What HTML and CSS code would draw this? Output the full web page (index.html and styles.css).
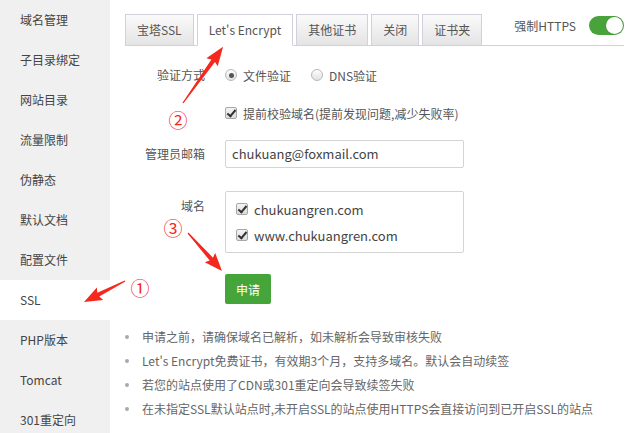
FILE: index.html
```
<!DOCTYPE html>
<html lang="zh-CN">
<head>
    <meta charset="UTF-8">
    <meta name="viewport" content="width=device-width, initial-scale=1.0">
    <title>SSL - Let's Encrypt</title>
    <link rel="stylesheet" href="styles.css">
</head>
<body>
    <div class="page">
        <ul class="side-menu">
            <li>域名管理</li>
            <li>子目录绑定</li>
            <li>网站目录</li>
            <li>流量限制</li>
            <li>伪静态</li>
            <li>默认文档</li>
            <li>配置文件</li>
            <li class="active">SSL</li>
            <li>PHP版本</li>
            <li>Tomcat</li>
            <li>301重定向</li>
        </ul>

        <div class="main">
            <div class="tab-bar">
                <div class="tabs">
                    <span class="tab">宝塔SSL</span>
                    <span class="tab active">Let's Encrypt</span>
                    <span class="tab">其他证书</span>
                    <span class="tab">关闭</span>
                    <span class="tab">证书夹</span>
                </div>
                <div class="force-https">
                    <span>强制HTTPS</span>
                    <span class="switch on"></span>
                </div>
            </div>

            <div class="form">
                <div class="row row-method">
                    <label class="row-label">验证方式</label>
                    <div class="row-field">
                        <span class="radio checked"></span><span class="opt">文件验证</span>
                        <span class="radio"></span><span class="opt">DNS验证</span>
                    </div>
                </div>
                <div class="row row-check">
                    <label class="row-label"></label>
                    <div class="row-field">
                        <span class="checkbox checked"></span><span class="opt">提前校验域名(提前发现问题,减少失败率)</span>
                    </div>
                </div>
                <div class="row row-mail">
                    <label class="row-label">管理员邮箱</label>
                    <div class="row-field">
                        <div class="text-input">chukuang@foxmail.com</div>
                    </div>
                </div>
                <div class="row row-domain">
                    <label class="row-label">域名</label>
                    <div class="row-field">
                        <div class="domain-box">
                            <div class="domain"><span class="checkbox checked"></span>chukuangren.com</div>
                            <div class="domain"><span class="checkbox checked"></span>www.chukuangren.com</div>
                        </div>
                    </div>
                </div>
                <div class="row row-submit">
                    <label class="row-label"></label>
                    <div class="row-field">
                        <button class="btn-apply">申请</button>
                    </div>
                </div>
            </div>

            <ul class="tips">
                <li>申请之前，请确保域名已解析，如未解析会导致审核失败</li>
                <li>Let's Encrypt免费证书，有效期3个月，支持多域名。默认会自动续签</li>
                <li>若您的站点使用了CDN或301重定向会导致续签失败</li>
                <li>在未指定SSL默认站点时,未开启SSL的站点使用HTTPS会直接访问到已开启SSL的站点</li>
            </ul>
        </div>

        <!-- red annotations drawn over the screenshot -->
        <svg class="marks" width="626" height="433" viewBox="0 0 626 433">
            <g fill="#f4281c">
                <polygon transform="translate(125 281) rotate(152.9)" points="0,-0.6 30,-2.2 28,-7 46,0 28,7 30,2.2 0,0.6"/>
                <polygon transform="translate(183 103) rotate(-54.5)" points="0,-0.6 52,-2.2 50,-7 69,0 50,7 52,2.2 0,0.6"/>
                <polygon transform="translate(188 233) rotate(48.2)" points="0,-0.6 35,-2.2 33,-7 51,0 33,7 35,2.2 0,0.6"/>
            </g>
            <g class="nums">
                <text x="140" y="287">①</text>
                <text x="178" y="119">②</text>
                <text x="173" y="227">③</text>
            </g>
        </svg>
    </div>
</body>
</html>
```

FILE: styles.css
```
* {
    box-sizing: border-box;
}
body {
    margin: 0;
    background: #fff;
    font-family: "Noto Sans CJK SC", sans-serif;
    font-size: 12px;
    color: #555;
}
.page {
    position: relative;
    display: flex;
    width: 626px;
    height: 433px;
    overflow: hidden;
}
.side-menu {
    list-style: none;
    margin: 0;
    padding: 0;
    width: 110px;
    flex-shrink: 0;
    background: #f0f0f0;
}
.side-menu li {
    height: 40px;
    line-height: 40px;
    padding-left: 20px;
    color: #444;
}
.side-menu li.active {
    background: #fff;
}
.main {
    flex: 1;
    padding: 14px 2px 0 15px;
}
.tab-bar {
    display: flex;
    justify-content: space-between;
    border-bottom: 1px solid #d2d0dc;
    height: 32px;
}
.tabs {
    display: flex;
    gap: 3px;
}
.tab {
    height: 32px;
    line-height: 30px;
    padding: 0 11px;
    border: 1px solid #d2d0dc;
    background: linear-gradient(#fafafa, #e4e4e4);
    color: #555;
}
.tab.active {
    background: #fff;
    border-bottom-color: #fff;
}
.force-https {
    display: flex;
    align-items: center;
    gap: 13px;
    margin-top: 2px;
    height: 19px;
}
.switch {
    position: relative;
    width: 35px;
    height: 19px;
    border-radius: 10px;
    background: #d8d8d8;
}
.switch.on {
    background: #47a33a;
}
.switch.on::after {
    content: "";
    position: absolute;
    right: 1px;
    top: 1px;
    width: 17px;
    height: 17px;
    border-radius: 50%;
    background: #fff;
    box-shadow: 0 0 1px rgba(0,0,0,0.3);
}
.form {
    margin-top: 14px;
}
.row {
    display: flex;
}
.row-label {
    width: 80px;
    margin-right: 20px;
    text-align: right;
    line-height: 30px;
    color: #555;
}
.row-field {
    display: flex;
    align-items: center;
    min-height: 30px;
}
.row-method { margin-bottom: 8px; }
.row-check { margin-bottom: 11px; }
.row-mail { margin-bottom: 22px; }
.row-domain { margin-bottom: 21px; }
.row-domain .row-label {
    line-height: 30px;
}
.opt {
    margin-left: 6px;
    margin-right: 20px;
    color: #555;
}
.radio {
    display: inline-block;
    width: 12px;
    height: 12px;
    border-radius: 50%;
    border: 1px solid #b8b8b8;
    background: linear-gradient(#fdfdfd, #e2e2e2);
    position: relative;
}
.radio.checked::after {
    content: "";
    position: absolute;
    left: 2.5px;
    top: 2.5px;
    width: 5px;
    height: 5px;
    border-radius: 50%;
    background: #555;
}
.checkbox {
    display: inline-block;
    width: 12px;
    height: 12px;
    border-radius: 2px;
    border: 1px solid #a8a8a8;
    background: linear-gradient(#f4f4f4, #dcdcdc);
    position: relative;
    flex-shrink: 0;
}
.checkbox.checked::after {
    content: "";
    position: absolute;
    left: 3px;
    top: 0px;
    width: 3px;
    height: 7px;
    border: solid #333;
    border-width: 0 2px 2px 0;
    transform: rotate(40deg);
}
.text-input {
    width: 239px;
    height: 28px;
    line-height: 26px;
    padding-left: 6px;
    border: 1px solid #d4d4d4;
    border-radius: 2px;
    font-size: 13px;
    color: #444;
}
.domain-box {
    width: 239px;
    height: 62px;
    padding: 4px 10px;
    border: 1px solid #d4d4d4;
    border-radius: 2px;
}
.domain {
    display: flex;
    align-items: center;
    gap: 6px;
    height: 26px;
    font-size: 13px;
    color: #444;
}
.btn-apply {
    height: 30px;
    padding: 0 11px;
    border: none;
    border-radius: 2px;
    background: #46a53a;
    color: #fff;
    font-family: inherit;
    font-size: 12px;
}
.tips {
    list-style: none;
    margin: 21px 0 0;
    padding: 0;
    color: #666;
}
.tips li {
    position: relative;
    height: 24px;
    line-height: 24px;
    padding-left: 17px;
}
.tips li::before {
    content: "";
    position: absolute;
    left: 0;
    top: 10px;
    width: 4px;
    height: 4px;
    border-radius: 50%;
    background: #aaa;
}
.marks {
    position: absolute;
    left: 0;
    top: 0;
    pointer-events: none;
}
.nums text {
    fill: #f4281c;
    font-family: "Noto Sans CJK SC", sans-serif;
    font-size: 19px;
    text-anchor: middle;
    dominant-baseline: central;
}
```
